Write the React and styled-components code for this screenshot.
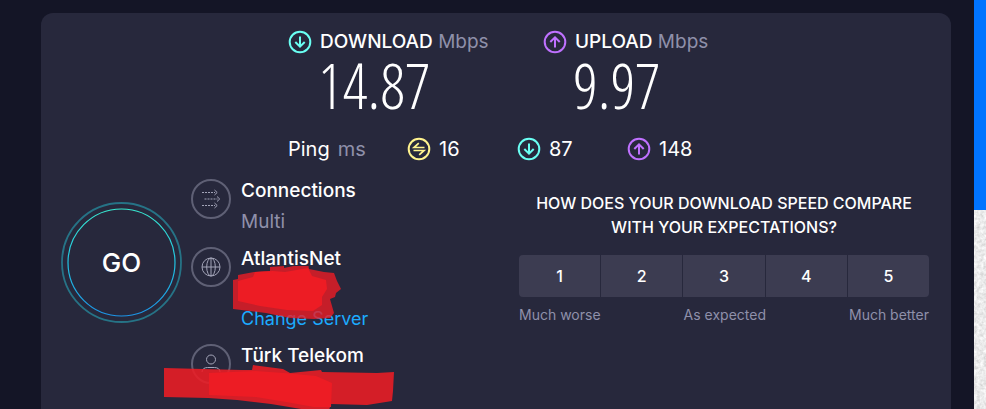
import React, { useState } from "react";
import styled, { createGlobalStyle } from "styled-components";

const GlobalStyle = createGlobalStyle`
  * {
    box-sizing: border-box;
  }
  body {
    margin: 0;
    background-color: #141526;
    color: #fff;
    font-family: Inter, "Open Sans", sans-serif;
    font-size: 19px;
    line-height: 24px;
  }
`;

const Page = styled.div`
  display: grid;
  grid-template-columns: 1fr 12px;
  min-height: 100vh;
`;

const Main = styled.main`
  display: flex;
  padding: 13px 23px 0 41px;
`;

const Panel = styled.section`
  flex: 1;
  padding: 17px 22px 10px 20px;
  border-radius: 12px 12px 0 0;
  background-color: #27283c;
`;

const SideStrip = styled.aside`
  display: flex;
  flex-direction: column;
`;

const StripAd = styled.div`
  height: 210px;
  background-color: #0074ff;
`;

const StripTexture = styled.svg`
  flex: 1;
  width: 100%;
  min-height: 0;
  background-color: #e4e4e4;
`;

const Results = styled.div`
  width: 424px;
  max-width: 100%;
  margin: 0 auto;
  padding-left: 5px;
  white-space: nowrap;
`;

const Speeds = styled.div`
  display: grid;
  grid-template-columns: 255px 1fr;
`;

const Label = styled.div`
  display: flex;
  align-items: center;
  gap: 8px;
`;

const Name = styled.span`
  font-weight: 500;
`;

const Unit = styled.span`
  color: #8f90aa;
`;

const Speed = styled.div`
  padding-left: 30px;
  font-family: "Open Sans Condensed Light", "Roboto Condensed Light",
    "Roboto Condensed", Roboto, sans-serif;
  font-size: 62px;
  font-weight: 300;
  line-height: 62px;
`;

const Pings = styled.div`
  display: grid;
  grid-template-columns: 119px 110px 110px 1fr;
  margin-top: 21px;
  font-size: 20px;
`;

const RoundIcon = styled.svg`
  flex: none;
  width: 24px;
  height: 24px;
  fill: none;
  stroke: ${({ $color }) => $color};
  stroke-width: 2;
`;

const Lower = styled.div`
  display: flex;
  align-items: flex-start;
  margin-top: 18px;
`;

const GoButton = styled.button`
  position: relative;
  flex: none;
  width: 121px;
  height: 121px;
  margin-top: 23px;
  padding: 0;
  border: 0;
  background: none;
  color: #fff;
  font: 500 26px Inter, "Open Sans", sans-serif;
  cursor: pointer;
`;

const GoRing = styled.svg`
  position: absolute;
  inset: 0;
  fill: none;
`;

const Details = styled.ul`
  display: flex;
  flex: 1;
  flex-direction: column;
  gap: 13px;
  margin: 0;
  padding: 0 0 0 9px;
  list-style: none;
`;

const Detail = styled.li`
  position: relative;
  display: flex;
  gap: 10px;
`;

const DetailIcon = styled.svg`
  flex: none;
  width: 40px;
  height: 40px;
  fill: none;
  stroke: #a3a4b8;
  stroke-width: 1;
`;

const DetailText = styled.div`
  display: flex;
  flex-direction: column;
  gap: 7px;
`;

const Hidden = styled.div`
  height: 24px;
`;

const ServerLink = styled.a`
  margin-top: -2px;
  color: #1cabff;
  font-size: 18px;
  text-decoration: none;
`;

const Scribble = styled.svg`
  position: absolute;
  top: ${({ $top }) => $top}px;
  left: ${({ $left }) => $left}px;
  fill: #ed1c24;
  pointer-events: none;
`;

const Survey = styled.fieldset`
  flex: 0 1 410px;
  min-width: 0;
  margin: 0;
  padding: 12px 0 0;
  border: 0;
`;

const Question = styled.legend`
  float: left;
  width: 100%;
  padding: 0 8px;
  font-size: 16px;
  font-weight: 500;
  text-align: center;
`;

const Scale = styled.div`
  display: grid;
  grid-template-columns: repeat(5, 1fr);
  gap: 1px;
  clear: both;
  padding-top: 16px;
`;

const ScaleButton = styled.button`
  height: 42px;
  padding: 0;
  border: 0;
  background-color: ${({ $active }) => ($active ? "#55566e" : "#3c3c51")};
  color: #fff;
  font: 500 16px Inter, "Open Sans", sans-serif;
  cursor: pointer;

  &:first-child {
    border-radius: 4px 0 0 4px;
  }
  &:last-child {
    border-radius: 0 4px 4px 0;
  }
`;

const ScaleLabels = styled.div`
  display: flex;
  justify-content: space-between;
  margin-top: 6px;
  color: #8f90aa;
  font-size: 14px;
`;

const YELLOW = "#fff38e";
const TEAL = "#6afff3";
const PURPLE = "#bf71ff";

function DownIcon() {
  return (
    <RoundIcon viewBox="0 0 24 24" $color={TEAL} aria-hidden="true">
      <circle cx="12" cy="12" r="10.3" />
      <path d="M12 6.500v10M7.300 12l4.700 4.700 4.700-4.700" />
    </RoundIcon>
  );
}

function UpIcon() {
  return (
    <RoundIcon viewBox="0 0 24 24" $color={PURPLE} aria-hidden="true">
      <circle cx="12" cy="12" r="10.3" />
      <path d="M12 17.500v-10M7.300 12l4.700-4.700 4.700 4.700" />
    </RoundIcon>
  );
}

function PingIcon() {
  return (
    <RoundIcon viewBox="0 0 24 24" $color={YELLOW} aria-hidden="true">
      <circle cx="12" cy="12" r="10.3" />
      <path d="M17.500 10.500H7l4.800-4.300M6.500 13.500H17l-4.800 4.300" strokeWidth="1.7" />
    </RoundIcon>
  );
}

function Ring() {
  return (
    <circle cx="20" cy="20" r="19" stroke="#5f6075" strokeWidth="2" />
  );
}

function App() {
  const [rating, setRating] = useState(null);

  return (
    <>
      <GlobalStyle />
      <Page>
        <Main>
          <Panel>
            <Results>
              <Speeds>
                <div>
                  <Label>
                    <DownIcon />
                    <span>
                      <Name>DOWNLOAD</Name> <Unit>Mbps</Unit>
                    </span>
                  </Label>
                  <Speed>14.87</Speed>
                </div>
                <div>
                  <Label>
                    <UpIcon />
                    <span>
                      <Name>UPLOAD</Name> <Unit>Mbps</Unit>
                    </span>
                  </Label>
                  <Speed>9.97</Speed>
                </div>
              </Speeds>
              <Pings>
                <Label>
                  <span>Ping</span>
                  <Unit>ms</Unit>
                </Label>
                <Label>
                  <PingIcon />
                  16
                </Label>
                <Label>
                  <DownIcon />
                  87
                </Label>
                <Label>
                  <UpIcon />
                  148
                </Label>
              </Pings>
            </Results>

            <Lower>
              <GoButton type="button">
                <GoRing viewBox="0 0 121 121" aria-hidden="true">
                  <defs>
                    <linearGradient id="go" x1="0" y1="0" x2="0" y2="1">
                      <stop offset="0" stopColor="#38e8d0" />
                      <stop offset="0.5" stopColor="#22c3e0" />
                      <stop offset="1" stopColor="#1c93e6" />
                    </linearGradient>
                  </defs>
                  <circle
                    cx="60.5"
                    cy="60.5"
                    r="59.5"
                    stroke="#267386"
                    strokeWidth="1.8"
                  />
                  <circle
                    cx="60.5"
                    cy="60.5"
                    r="53.5"
                    stroke="url(#go)"
                    strokeWidth="1.2"
                  />
                </GoRing>
                GO
              </GoButton>

              <Details>
                <Detail>
                  <DetailIcon viewBox="0 0 40 40" aria-hidden="true">
                    <Ring />
                    <path d="M11 13.500h13M13.500 20h13M11 26.500h13" strokeDasharray="2 1" />
                    <path d="M23.500 11l2.700 2.500-2.700 2.500M26 17.500l2.700 2.500-2.700 2.500M23.500 24l2.700 2.500-2.700 2.500" />
                  </DetailIcon>
                  <DetailText>
                    <Name>Connections</Name>
                    <Unit>Multi</Unit>
                  </DetailText>
                </Detail>
                <Detail>
                  <DetailIcon viewBox="0 0 40 40" aria-hidden="true">
                    <Ring />
                    <circle cx="20" cy="20" r="9" />
                    <ellipse cx="20" cy="20" rx="4.3" ry="9" />
                    <path d="M11 20h18M20 11v18" />
                  </DetailIcon>
                  <DetailText>
                    <Name>AtlantisNet</Name>
                    <Hidden />
                    <ServerLink href="#servers">Change Server</ServerLink>
                  </DetailText>
                  <Scribble $top={19} $left={42} width="110" height="58" aria-hidden="true">
                    <path
                      opacity="0.8"
                      d="M0 10l5-1v-4l16-3 16-1v-4l14-1 0 2 24-5 1 6 15 3 10 1 3 8 4 8-5 4-1 4-5 2 4 14-4 5-16 1-24-1-24-5-33-4z"
                      transform="translate(0 4)"
                    />
                    <path d="M5 15l15-4 2-5 18-1 12 1 23-4 4 8 14 4 1 9-5 8 0 8-9 6-26-1-27-4-22-5z" />
                  </Scribble>
                </Detail>
                <Detail>
                  <DetailIcon viewBox="0 0 40 40" aria-hidden="true">
                    <Ring />
                    <circle cx="20" cy="15.5" r="4.5" />
                    <path d="M11 28c0-3 2.500-4.500 5.500-4.500h7c3 0 5.500 1.500 5.500 4.500" />
                  </DetailIcon>
                  <DetailText>
                    <Name>Türk Telekom</Name>
                    <Hidden />
                  </DetailText>
                  <Scribble $top={20} $left={-27} width="232" height="45" aria-hidden="true">
                    <path
                      opacity="0.88"
                      d="M0 4l78 2 10 0 1-5 30 4 7 4 31-3 1 2 55 1 17-1-1 19-1 10-25 4-36-1-2 6-28-1-30-5-34-4-29-2-44-1z"
                    />
                    <path d="M45 9l46-2 29 2 32 3 16 7-1 24-17 0-28-5-30-5-47-2z" />
                  </Scribble>
                </Detail>
              </Details>

              <Survey>
                <Question>
                  HOW DOES YOUR DOWNLOAD SPEED COMPARE WITH YOUR EXPECTATIONS?
                </Question>
                <Scale>
                  {[1, 2, 3, 4, 5].map((value) => (
                    <ScaleButton
                      key={value}
                      type="button"
                      $active={rating === value}
                      onClick={() => setRating(value)}
                    >
                      {value}
                    </ScaleButton>
                  ))}
                </Scale>
                <ScaleLabels>
                  <span>Much worse</span>
                  <span>As expected</span>
                  <span>Much better</span>
                </ScaleLabels>
              </Survey>
            </Lower>
          </Panel>
        </Main>
        <SideStrip>
          <StripAd />
          <StripTexture aria-hidden="true">
            <filter id="grain">
              <feTurbulence type="fractalNoise" baseFrequency="0.3" numOctaves="3" />
              <feColorMatrix values="0.5 0 0 0 0.58  0.5 0 0 0 0.58  0.5 0 0 0 0.58  0 0 0 0 1" />
            </filter>
            <rect width="100%" height="100%" filter="url(#grain)" />
          </StripTexture>
        </SideStrip>
      </Page>
    </>
  );
}

export default App;
